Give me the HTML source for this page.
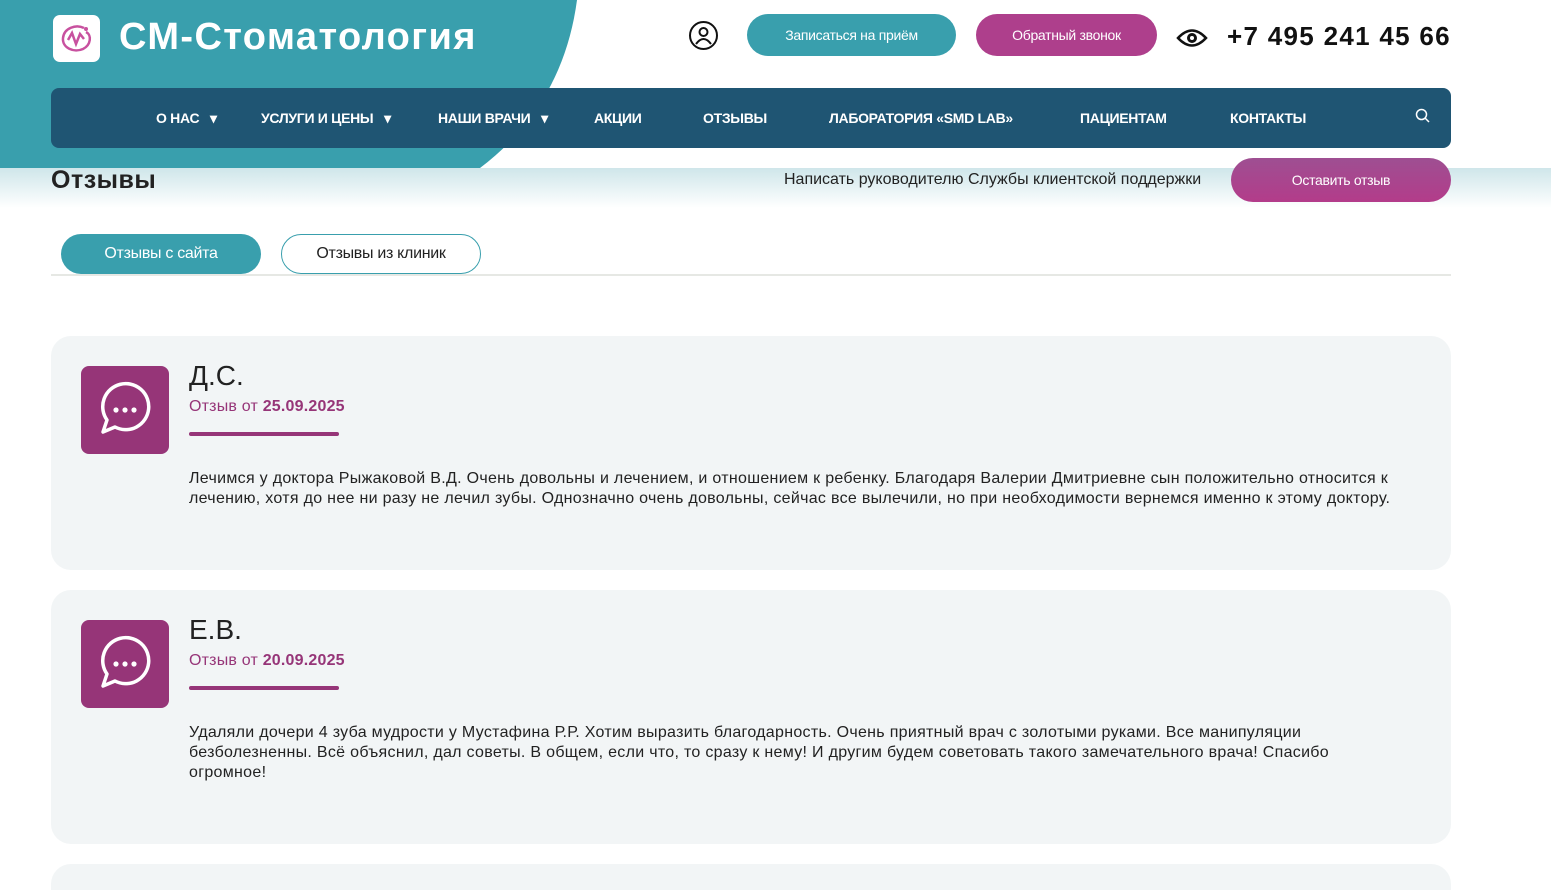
<!DOCTYPE html>
<html style="overflow:hidden;height:890px"><head><meta charset="utf-8"><style>
*{box-sizing:border-box;margin:0;padding:0}
body{width:1551px;height:890px;overflow:hidden;background:#fff;font-family:"Liberation Sans",Arial,sans-serif;position:relative}
.abs{position:absolute}
.grad{left:0;top:168px;width:1551px;height:40px;background:linear-gradient(#cfe6ea,#fff)}
.nav{left:51px;top:88px;width:1400px;height:60px;background:#1f5573;border-radius:8px}
.nav span{position:absolute;top:22px;color:#fff;font-weight:bold;font-size:14px;letter-spacing:-0.3px}
.btn{border-radius:22px;color:#fff;font-size:14px;text-align:center;line-height:42px;letter-spacing:-0.3px}
.card{left:51px;width:1400px;background:#f2f5f6;border-radius:20px;overflow:hidden}
.ico{left:30px;top:30px;width:88px;height:88px;background:#963578;border-radius:8px}
.name{left:138px;top:24px;font-size:28px;color:#222}
.date{left:138px;top:62px;font-size:16px;color:#963578;letter-spacing:0.2px}
.line{left:138px;top:96px;width:150px;height:4px;background:#963578;border-radius:2px}
.txt{left:138px;top:133px;width:1205px;font-size:16px;line-height:20px;color:#222;letter-spacing:0.3px}
</style></head><body>
<svg class="abs" style="left:0;top:0" width="600" height="170"><path d="M0 0 L577 0 Q563 105 480 168 L0 168 Z" fill="#399fad"/></svg>
<div class="abs grad"></div>
<div class="abs" style="left:53px;top:15px;width:47px;height:47px;background:#fff;border-radius:7px"></div>
<svg class="abs" style="left:58px;top:22px" width="38" height="34" viewBox="0 0 38 34"><path d="M26 6 C18 2 6 6 5 16 C4 26 16 31 25 27 C33 23 34 13 28 10 M10 18 L14 11 L18 22 L22 12 L26 17" fill="none" stroke="#c8519f" stroke-width="2.5"/><circle cx="28" cy="7" r="2" fill="#c8519f"/></svg>
<div class="abs" style="left:119px;top:16px;font-size:38px;font-weight:bold;color:#fff;letter-spacing:1.4px">СМ-Стоматология</div>
<svg class="abs" style="left:688px;top:20px" width="31" height="31" viewBox="0 0 31 31"><circle cx="15.5" cy="15.5" r="13.5" fill="none" stroke="#111" stroke-width="2"/><circle cx="15.5" cy="12" r="4" fill="none" stroke="#111" stroke-width="2"/><path d="M8 24 Q15.5 14 23 24" fill="none" stroke="#111" stroke-width="2"/></svg>
<div class="abs btn" style="left:747px;top:14px;width:209px;background:#399fad">Записаться на приём</div>
<div class="abs btn" style="left:976px;top:14px;width:181px;background:#ae3f8c">Обратный звонок</div>
<svg class="abs" style="left:1176px;top:27px" width="32" height="22" viewBox="0 0 32 22"><path d="M2 11 Q16 -4 30 11 Q16 26 2 11Z" fill="none" stroke="#111" stroke-width="2.5"/><circle cx="16" cy="11" r="5" fill="#111"/><circle cx="16" cy="11" r="2" fill="#fff"/></svg>
<div class="abs" style="left:1227px;top:21px;font-size:26px;font-weight:bold;color:#111;letter-spacing:1.3px">+7 495 241 45 66</div>
<div class="abs nav">
<span style="left:105px">О НАС &nbsp;&nbsp;▾</span>
<span style="left:210px">УСЛУГИ И ЦЕНЫ &nbsp;&nbsp;▾</span>
<span style="left:387px">НАШИ ВРАЧИ &nbsp;&nbsp;▾</span>
<span style="left:543px">АКЦИИ</span>
<span style="left:652px">ОТЗЫВЫ</span>
<span style="left:778px">ЛАБОРАТОРИЯ «SMD LAB»</span>
<span style="left:1029px">ПАЦИЕНТАМ</span>
<span style="left:1179px">КОНТАКТЫ</span>
<svg style="position:absolute;left:1364px;top:20px" width="16" height="16"><circle cx="6.5" cy="6.5" r="5" fill="none" stroke="#fff" stroke-width="1.5"/><path d="M10 10 L14 14" stroke="#fff" stroke-width="1.5"/></svg>
</div>
<div class="abs" style="left:51px;top:166px;font-size:25px;font-weight:bold;color:#222;letter-spacing:0.5px">Отзывы</div>
<div class="abs" style="left:784px;top:171px;font-size:16px;color:#222">Написать руководителю Службы клиентской поддержки</div>
<div class="abs btn" style="left:1231px;top:158px;width:220px;height:44px;line-height:44px;background:linear-gradient(#9e4f92,#b33c8a)">Оставить отзыв</div>
<div class="abs btn" style="left:61px;top:234px;width:200px;height:40px;line-height:40px;font-size:16px;background:#399fad">Отзывы с сайта</div>
<div class="abs btn" style="left:281px;top:234px;width:200px;height:40px;line-height:38px;font-size:16px;color:#222;border:1px solid #399fad">Отзывы из клиник</div>
<div class="abs" style="left:51px;top:274px;width:1400px;height:2px;background:#e6e8e4"></div>

<div class="abs card" style="top:336px;height:234px">
<div class="abs ico"><svg width="88" height="88" viewBox="0 0 88 88"><path d="M22 66 L26 54 A23 23 0 1 1 34 61 Z" fill="none" stroke="#fff" stroke-width="3.5" stroke-linejoin="round"/><circle cx="35" cy="44" r="2.6" fill="#fff"/><circle cx="44" cy="44" r="2.6" fill="#fff"/><circle cx="53" cy="44" r="2.6" fill="#fff"/></svg></div>
<div class="abs name">Д.С.</div>
<div class="abs date">Отзыв от <b>25.09.2025</b></div>
<div class="abs line"></div>
<div class="abs txt">Лечимся у доктора Рыжаковой В.Д. Очень довольны и лечением, и отношением к ребенку. Благодаря Валерии Дмитриевне сын положительно относится к лечению, хотя до нее ни разу не лечил зубы. Однозначно очень довольны, сейчас все вылечили, но при необходимости вернемся именно к этому доктору.</div>
</div>

<div class="abs card" style="top:590px;height:254px">
<div class="abs ico"><svg width="88" height="88" viewBox="0 0 88 88"><path d="M22 66 L26 54 A23 23 0 1 1 34 61 Z" fill="none" stroke="#fff" stroke-width="3.5" stroke-linejoin="round"/><circle cx="35" cy="44" r="2.6" fill="#fff"/><circle cx="44" cy="44" r="2.6" fill="#fff"/><circle cx="53" cy="44" r="2.6" fill="#fff"/></svg></div>
<div class="abs name">Е.В.</div>
<div class="abs date">Отзыв от <b>20.09.2025</b></div>
<div class="abs line"></div>
<div class="abs txt" style="width:1145px">Удаляли дочери 4 зуба мудрости у Мустафина Р.Р. Хотим выразить благодарность. Очень приятный врач с золотыми руками. Все манипуляции безболезненны. Всё объяснил, дал советы. В общем, если что, то сразу к нему! И другим будем советовать такого замечательного врача! Спасибо огромное!</div>
</div>
<div class="abs card" style="top:864px;height:26px;border-radius:20px 20px 0 0"></div>
</body></html>
